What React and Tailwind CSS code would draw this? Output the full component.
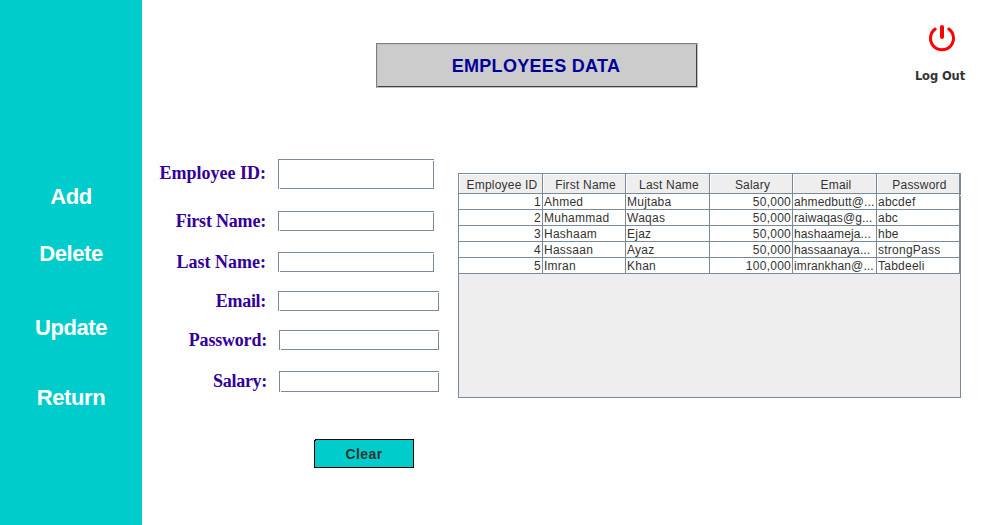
const navItems = [
  { label: 'Add', place: 'mt-[183px]' },
  { label: 'Delete', place: 'mt-[29px]' },
  { label: 'Update', place: 'mt-[46px]' },
  { label: 'Return', place: 'mt-[42px]' },
];

const fields = [
  { label: 'Employee ID:', row: 'h-[30px]', text: 'pb-[2px]', box: 'w-[156px]' },
  { label: 'First Name:', row: 'mt-[22px] h-[20px]', text: 'tracking-[-0.2px]', box: 'w-[156px]' },
  { label: 'Last Name:', row: 'mt-[21px] h-[20px]', text: '', box: 'w-[156px]' },
  { label: 'Email:', row: 'mt-[19px] h-[20px]', text: 'tracking-[-0.3px]', box: 'w-[161px]' },
  { label: 'Password:', row: 'mt-[19px] h-[20px] pl-px', text: 'tracking-[-0.2px]', box: 'w-[160px]' },
  { label: 'Salary:', row: 'mt-[21px] h-[21px] pl-px', text: 'pb-px tracking-[-0.3px]', box: 'w-[160px]' },
];

const columns = ['Employee ID', 'First Name', 'Last Name', 'Salary', 'Email', 'Password'];

const employees = [
  ['1', 'Ahmed', 'Mujtaba', '50,000', 'ahmedbutt@...', 'abcdef'],
  ['2', 'Muhammad', 'Waqas', '50,000', 'raiwaqas@g...', 'abc'],
  ['3', 'Hashaam', 'Ejaz', '50,000', 'hashaameja...', 'hbe'],
  ['4', 'Hassaan', 'Ayaz', '50,000', 'hassaanaya...', 'strongPass'],
  ['5', 'Imran', 'Khan', '100,000', 'imrankhan@...', 'Tabdeeli'],
];

const gridColumns = 'grid grid-cols-[84px_83px_84px_83px_84px_83px]';

function Sidebar() {
  return (
    <nav className="flex w-[142px] shrink-0 flex-col items-center bg-[#00cccc] font-['Liberation_Sans',Arial,sans-serif] text-[22px] font-bold leading-[28px] tracking-[-0.4px] text-white">
      {navItems.map((item) => (
        <button key={item.label} className={item.place}>{item.label}</button>
      ))}
    </nav>
  );
}

function Field({ label, row, text, box }) {
  return (
    <label className={`flex items-center ${row}`}>
      <span className="flex w-[136px] justify-end whitespace-nowrap pr-[12px] font-['Liberation_Serif','Times_New_Roman',serif] text-[18px] font-bold leading-[20px] text-[#330099]">
        <span className={text}>{label}</span>
      </span>
      <span className={`relative h-full ${box}`}>
        <input className="block h-full w-full border border-[#7a8a99] bg-white outline-none" />
        <i className="absolute right-0 top-px size-px bg-white" />
        <i className="absolute bottom-0 left-px size-px bg-white" />
      </span>
    </label>
  );
}

function EmployeeTable() {
  return (
    <div className="relative h-[225px] w-[503px] border border-[#7a8a99] bg-[#eeeeee] font-['Liberation_Sans',Arial,sans-serif] text-[12px] tracking-[0.25px] text-[#333333]">
      <i className="absolute -right-px top-[21px] size-px bg-white" />
      <div className={gridColumns}>
        {columns.map((name) => (
          <div key={name} className="h-[20px] border-b border-r border-[#7a8a99]">
            <div className="h-full border-l border-t border-white pl-[2px] text-center leading-[20px] tracking-[0.2px]">{name}</div>
          </div>
        ))}
      </div>
      {employees.map((employee) => (
        <div key={employee[0]} className={gridColumns}>
          {employee.map((value, i) => (
            <div
              key={i}
              className={`h-[16px] whitespace-nowrap border-b border-r border-[#7a8a99] bg-white px-px leading-[16px] ${i === 0 || i === 3 ? 'text-right' : 'text-left'} ${i === 4 ? 'tracking-[0.12px]' : ''}`}
            >
              {value}
            </div>
          ))}
        </div>
      ))}
    </div>
  );
}

export default function App() {
  return (
    <div className="flex h-[525px] w-[993px] overflow-hidden bg-white">
      <Sidebar />
      <main className="flex flex-1 flex-col">
        <header className="flex h-[159px] items-start">
          <div className="ml-[234px] mt-[43px] h-[45px] w-[322px] border border-b-[#c0c0c0] border-l-[#808080] border-r-[#c0c0c0] border-t-[#808080]">
            <h1 className="h-full border border-b-[#404040] border-l-[#c0c0c0] border-r-[#404040] border-t-[#c0c0c0] bg-[#cccccc] pr-[2px] text-center font-['Liberation_Sans',Arial,sans-serif] text-[18px] font-bold leading-[43px] tracking-[0.3px] text-[#000099]">
              EMPLOYEES DATA
            </h1>
          </div>
          <button className="ml-[212px] mt-[22px] flex w-[60px] flex-col items-center">
            <svg className="ml-[4px]" width="32" height="32" viewBox="0 0 32 32" fill="none" stroke="#ff0000" strokeLinecap="round">
              <path d="M9.2 7A11.5 11.5 0 1 0 22.8 7" strokeWidth="3" />
              <path d="M16 5V15" strokeWidth="4" />
            </svg>
            <span className="mt-[14px] whitespace-nowrap font-['DejaVu_Sans',sans-serif] text-[11.5px] font-bold leading-[16px] tracking-[-0.1px] text-[#333333]">Log Out</span>
          </button>
        </header>
        <div className="flex">
          <form className="flex w-[316px] flex-col">
            {fields.map((field) => (
              <Field key={field.label} {...field} />
            ))}
            <button type="button" className="relative ml-[172px] mt-[47px] h-[29px] w-[100px] border border-black bg-[#00cccc] pt-px font-['Liberation_Sans',Arial,sans-serif] text-[14px] font-bold leading-[27px] tracking-[0.4px] text-[#333333]">
              <i className="absolute -left-px -top-px size-px bg-white" />
              <i className="absolute left-0 top-0 size-px bg-black" />
              Clear
            </button>
          </form>
          <section className="mt-[14px]">
            <EmployeeTable />
          </section>
        </div>
      </main>
    </div>
  );
}
